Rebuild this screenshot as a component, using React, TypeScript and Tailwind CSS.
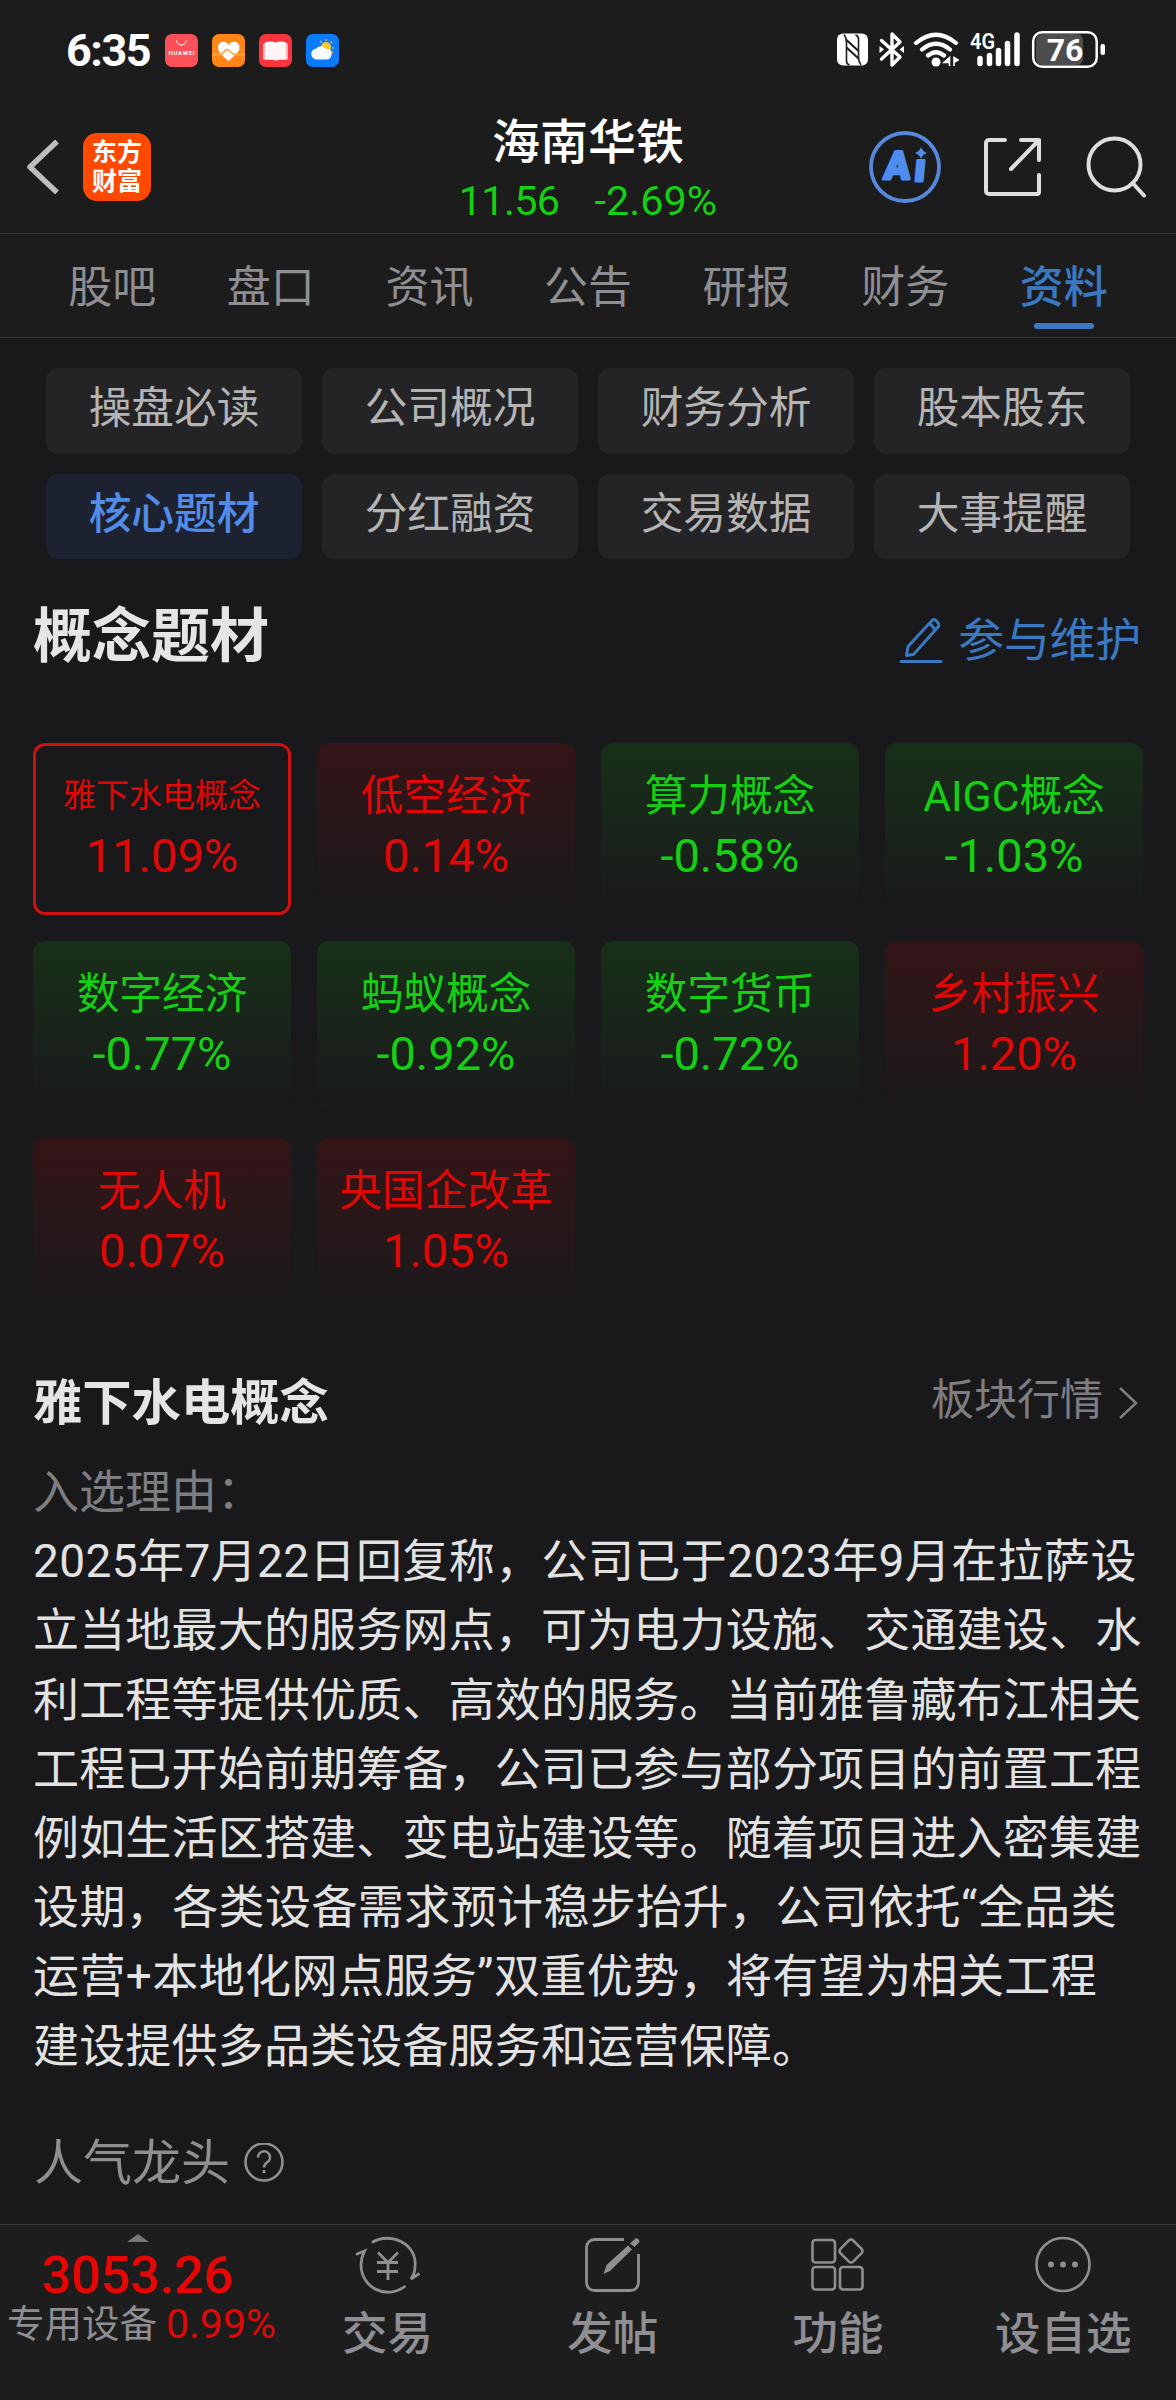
import { clsx } from 'clsx';

type Trend = 'up' | 'down';

interface Concept {
  name: string;
  change: string;
  trend: Trend;
  active?: boolean;
}

const tabs = ['股吧', '盘口', '资讯', '公告', '研报', '财务', '资料'];

const sections = [
  '操盘必读',
  '公司概况',
  '财务分析',
  '股本股东',
  '核心题材',
  '分红融资',
  '交易数据',
  '大事提醒',
];

const concepts: Concept[] = [
  { name: '雅下水电概念', change: '11.09%', trend: 'up', active: true },
  { name: '低空经济', change: '0.14%', trend: 'up' },
  { name: '算力概念', change: '-0.58%', trend: 'down' },
  { name: 'AIGC概念', change: '-1.03%', trend: 'down' },
  { name: '数字经济', change: '-0.77%', trend: 'down' },
  { name: '蚂蚁概念', change: '-0.92%', trend: 'down' },
  { name: '数字货币', change: '-0.72%', trend: 'down' },
  { name: '乡村振兴', change: '1.20%', trend: 'up' },
  { name: '无人机', change: '0.07%', trend: 'up' },
  { name: '央国企改革', change: '1.05%', trend: 'up' },
];

// lines with latin digits or quotes are set a little looser
const reasonLines = [
  { text: '2025年7月22日回复称，公司已于2023年9月在拉萨设', loose: true },
  { text: '立当地最大的服务网点，可为电力设施、交通建设、水' },
  { text: '利工程等提供优质、高效的服务。当前雅鲁藏布江相关' },
  { text: '工程已开始前期筹备，公司已参与部分项目的前置工程' },
  { text: '例如生活区搭建、变电站建设等。随着项目进入密集建' },
  { text: '设期，各类设备需求预计稳步抬升，公司依托“全品类', loose: true },
  { text: '运营+本地化网点服务”双重优势，将有望为相关工程', loose: true },
  { text: '建设提供多品类设备服务和运营保障。' },
];

function AppBadges() {
  return (
    <div className="flex gap-[14px]">
      <svg width="33" height="33" viewBox="0 0 33 33">
        <rect width="33" height="33" rx="7" fill="#fb5058" />
        <path d="M11.5 6.5c1 6 9 6 10 0" fill="none" stroke="#fff" strokeWidth="1" />
        <text x="16.5" y="21" fontSize="6" fontWeight="700" fill="#fff" textAnchor="middle" textLength="26" fontFamily="Roboto, sans-serif">
          HUAWEI
        </text>
      </svg>
      <svg width="33" height="33" viewBox="0 0 33 33">
        <rect width="33" height="33" rx="7" fill="#ff8616" />
        <path d="M16.5 27C10 21 6 18 6 13.500C6 7 14 6 16.500 11C19 6 27.500 7 27.500 13.500C27.500 18 23 21 16.500 27Z" fill="#fff" />
        <path d="M0 20.500h8c4 0 4-5 7-5s4 5 8 5h10" fill="none" stroke="#ffa845" strokeWidth="1.800" />
      </svg>
      <svg width="33" height="33" viewBox="0 0 33 33">
        <rect width="33" height="33" rx="7" fill="#f8353e" />
        <rect x="4" y="9" width="25" height="17" rx="2" fill="#fbb4b6" />
        <path d="M6 8.500Q11 6.500 16.500 8.500Q22 6.500 27 8.500V25Q22 25 16.500 26.500Q11 25 6 25Z" fill="#fff6f5" />
      </svg>
      <svg width="33" height="33" viewBox="0 0 33 33">
        <rect width="33" height="33" rx="7" fill="#0a7bfa" />
        <circle cx="20" cy="13" r="5" fill="#fdc52e" />
        <path d="M20 5v2M26 7.500l-1.500 1.500M28 14h-2M14 7l1.500 1.500M26 18l1 1" stroke="#fdc52e" strokeWidth="1.200" />
        <path d="M11 25.500a5.500 5.500 0 0 1-.5-11c1.500-3 7-3.500 9 .5 5-1 7 2.500 6 6-.5 3-2.500 4.500-5 4.500z" fill="#f4fbff" />
      </svg>
    </div>
  );
}

function StatusIcons() {
  return (
    <svg width="270" height="40" viewBox="836 30 270 40" fill="none">
      {/* nfc */}
      <rect x="837" y="33.500" width="31" height="32" rx="6" fill="#fff" />
      <path d="M844 34.500q2.500 3 2.500 8V61q0 3 3 4M861 65q-2.500-3-2.500-8V39q0-3-3-4" stroke="#1c1c1c" strokeWidth="1.600" />
      <path d="M846.500 40l12 11M846.500 47.500l12 11" stroke="#1c1c1c" strokeWidth="2" />
      {/* bluetooth */}
      <path d="M881.500 40.500L900 57l-8 8V34l8 8-18.500 17" stroke="#fff" strokeWidth="3.400" strokeLinejoin="round" strokeLinecap="round" />
      <path d="M879.500 46l4.500 3.500-4.500 3.500zM904 46l-4.500 3.500 4.500 3.500z" fill="#fff" />
      {/* wifi */}
      <path d="M916 43q20-16.500 40 0M922 49.500q14-11.500 28 0M928 55.500q8-6.500 16 0" stroke="#fff" strokeWidth="4.200" strokeLinecap="round" />
      <circle cx="936" cy="62" r="4.500" fill="#fff" />
      <path d="M949.500 57.500v8.500M949.500 57.500l-5.500 5h5zM954 66v-8.500M954 57.500v5l4-2.500z" fill="#fff" stroke="#fff" strokeWidth="1.600" />
      {/* cellular */}
      <text x="970" y="49" fontSize="22" fontWeight="600" fill="#fff" textLength="25" lengthAdjust="spacingAndGlyphs" fontFamily="Roboto, sans-serif">
        4G
      </text>
      <path d="M980 58.500v5M989.500 55.500v8M998.500 50.500v13M1007.500 43.500v20M1017 35v28.500" stroke="#fff" strokeWidth="5.500" strokeLinecap="round" />
      {/* battery */}
      <rect x="1036" y="34" width="47" height="31" rx="6" fill="#4d4d4d" />
      <rect x="1033.200" y="32.200" width="63.500" height="34.500" rx="9" stroke="#fff" strokeWidth="2.500" />
      <text x="1065" y="61" fontSize="32" fontWeight="700" fill="#fff" textAnchor="middle" fontFamily="Roboto, sans-serif">
        76
      </text>
      <rect x="1100.500" y="44" width="4.500" height="11" rx="2" fill="#fff" />
    </svg>
  );
}

function StatusBar() {
  return (
    <div className="flex h-[100px] items-center justify-between pl-[66px] pr-[70px]">
      <div className="flex items-center gap-[16px]">
        <span className="w-[83px] whitespace-nowrap text-[45px] leading-none font-bold tracking-[-1.500px] text-white">6:35</span>
        <AppBadges />
      </div>
      <StatusIcons />
    </div>
  );
}

function AiIcon() {
  return (
    <svg width="74" height="74" viewBox="0 0 74 74">
      <circle cx="37" cy="37" r="34" fill="none" stroke="#5689de" strokeWidth="3.800" />
      <g
        transform="translate(4.500 0) skewX(-5)"
        fill="#4f8cf0"
        stroke="#4f8cf0"
        strokeWidth="2.800"
        strokeLinejoin="round"
        fontSize="39"
        fontWeight="900"
        fontFamily="Roboto, sans-serif"
      >
        <text x="15" y="49.500" textLength="26" lengthAdjust="spacingAndGlyphs">
          A
        </text>
        <text x="45.500" y="51.500">
          ı
        </text>
      </g>
      <path d="M53 17q1.500 4.500 6 6-4.500 1.500-6 6-1.500-4.500-6-6 4.500-1.500 6-6z" fill="#4f8cf0" />
    </svg>
  );
}

function Header() {
  return (
    <header className="grid h-[133px] grid-cols-[1fr_auto_1fr] items-center">
      <div className="flex items-center pl-[26px]">
        <svg width="34" height="56" viewBox="0 0 34 56" fill="none">
          <path d="M31 2.500L4 28l27 25.500" stroke="#bdbdbd" strokeWidth="5.500" strokeLinejoin="round" />
        </svg>
        <div className="ml-[23px] flex h-[68px] w-[68px] flex-col items-center justify-center rounded-[14px] bg-[#ff4800] text-[25px] leading-[29px] font-bold text-white">
          <span>东方</span>
          <span>财富</span>
        </div>
      </div>
      <div className="flex flex-col items-center pt-[9px]">
        <span className="text-[48px] leading-[60px] font-medium text-white">海南华铁</span>
        <div className="flex gap-[35px] text-[41.500px] leading-[56px] text-[#14cf14]">
          <span className="tracking-[-0.700px]">11.56</span>
          <span>-2.69%</span>
        </div>
      </div>
      <div className="flex items-center justify-end pr-[28px]">
        <AiIcon />
        <svg className="ml-[41px]" width="60" height="60" viewBox="0 0 60 60" fill="none" stroke="#dedede" strokeWidth="4" strokeLinecap="round" strokeLinejoin="round">
          <path d="M22 3H6a3 3 0 0 0-3 3v48a3 3 0 0 0 3 3h48a2 2 0 0 0 2-2V38" />
          <path d="M38 3h18v20M56 3L28 32" />
        </svg>
        <svg className="ml-[43px]" width="62" height="62" viewBox="0 0 62 62" fill="none" stroke="#dedede" strokeWidth="4" strokeLinecap="round">
          <circle cx="28.500" cy="28.500" r="26" />
          <path d="M47 47.500l11 12" />
        </svg>
      </div>
    </header>
  );
}

function Tabs() {
  return (
    <nav className="flex h-[105px] border-y border-[#363637] px-[33px]">
      {tabs.map((tab) => {
        const active = tab === '资料';
        return (
          <div key={tab} className="flex flex-1 flex-col items-center pt-[24px]">
            <span className={clsx('text-[44px] leading-[60px]', active ? 'font-medium text-[#3a78c2]' : 'text-[#8e8e93]')}>{tab}</span>
            {active && <span className="mt-[5px] h-[6px] w-[60px] rounded-full bg-[#3a78c2]" />}
          </div>
        );
      })}
    </nav>
  );
}

function SectionGrid() {
  return (
    <div className="mt-[30px] grid grid-cols-4 gap-[20px] px-[46px]">
      {sections.map((name) => (
        <div
          key={name}
          className={clsx(
            'flex h-[85.500px] items-center justify-center rounded-[12px] pb-[4px] text-[42.700px] leading-none',
            name === '核心题材' ? 'bg-[#1c2230] font-medium text-[#528ce8]' : 'bg-[#242426] text-[#b4b4b4]',
          )}
        >
          {name}
        </div>
      ))}
    </div>
  );
}

function ConceptCard({ name, change, trend, active }: Concept) {
  return (
    <div
      className={clsx(
        'flex h-[172px] flex-col items-center rounded-[12px]',
        trend === 'up' ? 'text-[#e00707]' : 'text-[#14cf14]',
        active && 'border-[3px] border-[#d01010] pt-[20px]',
        !active && 'bg-linear-to-b to-[#19191b] pt-[23px]',
        !active && (trend === 'up' ? 'from-[#341417]' : 'from-[#173018]'),
      )}
    >
      <span className={clsx('leading-[60px] whitespace-nowrap', active ? 'text-[33px]' : 'text-[42.700px]')}>{name}</span>
      <span className="text-[47px] leading-[59px]">{change}</span>
    </div>
  );
}

function BottomBar() {
  return (
    <footer className="flex h-[176px] border-t border-[#363637] bg-[#1d1d1d] text-[#8e8e93]">
      <div className="flex w-[275px] flex-col items-center">
        <svg className="mt-[9px]" width="22" height="8" viewBox="0 0 22 8">
          <path d="M0 8L11 0l11 8z" fill="#77777b" />
        </svg>
        <span className="mt-[6px] text-[52.500px] leading-[54px] font-medium tracking-[-0.300px] text-[#e60606]">3053.26</span>
        <div className="-mt-[2px] flex items-center gap-[9px] pl-[8px] text-[37.500px] leading-[48px] whitespace-nowrap">
          <span>专用设备</span>
          <span className="text-[41px] text-[#e00707]">0.99%</span>
        </div>
      </div>
      <BottomItem label="交易">
        <svg width="66" height="60" viewBox="0 0 66 60" fill="none" stroke="#8e8e93" strokeWidth="2.800">
          <path d="M17 7.500C35-4 63 9 60 32c0 5-2 9-4 12l8.500-5.500" />
          <path d="M50.500 51C31 66 6 52 6 30c0-5 1-9 3.500-14L1 19.500" />
          <path d="M23 17.500l10 10 10-10M33 27v18M22 27.500h21M22 36.500h21" />
        </svg>
      </BottomItem>
      <BottomItem label="发帖">
        <svg width="56" height="60" viewBox="0 0 56 60" fill="none" stroke="#8e8e93" strokeWidth="2.800">
          <path d="M39 4.500H9.500a8 8 0 0 0-8 8v35a8 8 0 0 0 8 8h36a8 8 0 0 0 8-8V19" />
          <path d="M18.500 39l3-9L43 10.500l4 4-22 21.500zM45 8.500l5.500-5q3-1 4 3.500l-5 5z" fill="#8e8e93" stroke="none" />
        </svg>
      </BottomItem>
      <BottomItem label="功能">
        <svg width="54" height="60" viewBox="0 0 54 60" fill="none" stroke="#8e8e93" strokeWidth="2.600">
          <rect x="1.500" y="5" width="22.500" height="22.500" rx="3" />
          <rect x="1.500" y="32" width="22.500" height="22.500" rx="3" />
          <rect x="29" y="32" width="22.500" height="22.500" rx="3" />
          <rect x="31" y="7" width="18" height="18" rx="3" transform="rotate(45 40 16)" />
        </svg>
      </BottomItem>
      <BottomItem label="设自选">
        <svg width="58" height="60" viewBox="0 0 58 60" fill="none">
          <circle cx="29" cy="29.500" r="26.500" stroke="#8e8e93" strokeWidth="2.600" />
          <g fill="#8e8e93">
            <circle cx="17" cy="29.500" r="3" />
            <circle cx="29" cy="29.500" r="3" />
            <circle cx="41" cy="29.500" r="3" />
          </g>
        </svg>
      </BottomItem>
    </footer>
  );
}

function BottomItem({ label, children }: { label: string; children: React.ReactNode }) {
  return (
    <div className="flex flex-1 flex-col items-center pt-[10px]">
      {children}
      <span className="mt-[10px] text-[45.500px] leading-[60px] font-medium">{label}</span>
    </div>
  );
}

export default function App() {
  return (
    <div className="flex h-[2400px] w-[1176px] flex-col overflow-hidden bg-[#19191b] font-[Roboto,'Noto_Sans_CJK_SC',sans-serif]">
      <div className="bg-[#1c1c1c]">
        <StatusBar />
        <Header />
        <Tabs />
      </div>
      <main className="flex-1">
        <SectionGrid />
        <div className="mt-[40px] flex h-[74px] items-center justify-between pr-[35px] pl-[33px]">
          <h1 className="text-[59px] leading-none font-bold text-[#e5e5e5]">概念题材</h1>
          <div className="flex items-center gap-[15px] pt-[8px] text-[#3a78c2]">
            <svg width="44" height="46" viewBox="0 0 44 46" fill="none" stroke="#3a78c2" strokeWidth="3" strokeLinecap="round" strokeLinejoin="round">
              <path d="M7.500 38.500l1.500-9L33 3.500q2-2 4 0l2 2.500q2 2 0 4L14.500 37.500zM31 6.500l5.500 6.500" />
              <path d="M2 44.500h40" />
            </svg>
            <span className="text-[46px] leading-none tracking-[-0.300px]">参与维护</span>
          </div>
        </div>
        <div className="mt-[70px] grid grid-cols-4 gap-x-[26px] gap-y-[25.500px] px-[33px]">
          {concepts.map((concept) => (
            <ConceptCard key={concept.name} {...concept} />
          ))}
        </div>
        <div className="mt-[60px] flex h-[60px] items-center justify-between pr-[38px] pl-[33px]">
          <h2 className="pt-[7px] text-[49.300px] leading-none font-bold text-[#e5e5e5]">雅下水电概念</h2>
          <div className="flex items-center gap-[15px] text-[#7e7e82]">
            <span className="text-[43px] leading-none">板块行情</span>
            <svg className="mt-[6px]" width="20" height="34" viewBox="0 0 20 34" fill="none">
              <path d="M2 2l16 15L2 32" stroke="#7e7e82" strokeWidth="2.500" />
            </svg>
          </div>
        </div>
        <div className="mt-[28px] px-[33px] text-[46px] leading-[69.200px] text-[#e2e2e2]">
          <p className="text-[#7e7e82]">入选理由：</p>
          {reasonLines.map(({ text, loose }) => (
            <p key={text} className={clsx('whitespace-nowrap', loose ? 'tracking-[0.400px]' : 'tracking-[0.180px]')}>
              {text}
            </p>
          ))}
        </div>
        <div className="mt-[48px] flex items-center gap-[14px] pl-[34px] text-[#8e8e93]">
          <span className="text-[49px] leading-[69px]">人气龙头</span>
          <svg width="40" height="40" viewBox="0 0 40 40" fill="none" stroke="#8f8f8f" strokeWidth="2.600">
            <circle cx="20" cy="19" r="18.500" />
            <path d="M14 14.500a6 6 0 1 1 9 5q-3 2-3 5M20 27v3" />
          </svg>
        </div>
      </main>
      <BottomBar />
    </div>
  );
}
